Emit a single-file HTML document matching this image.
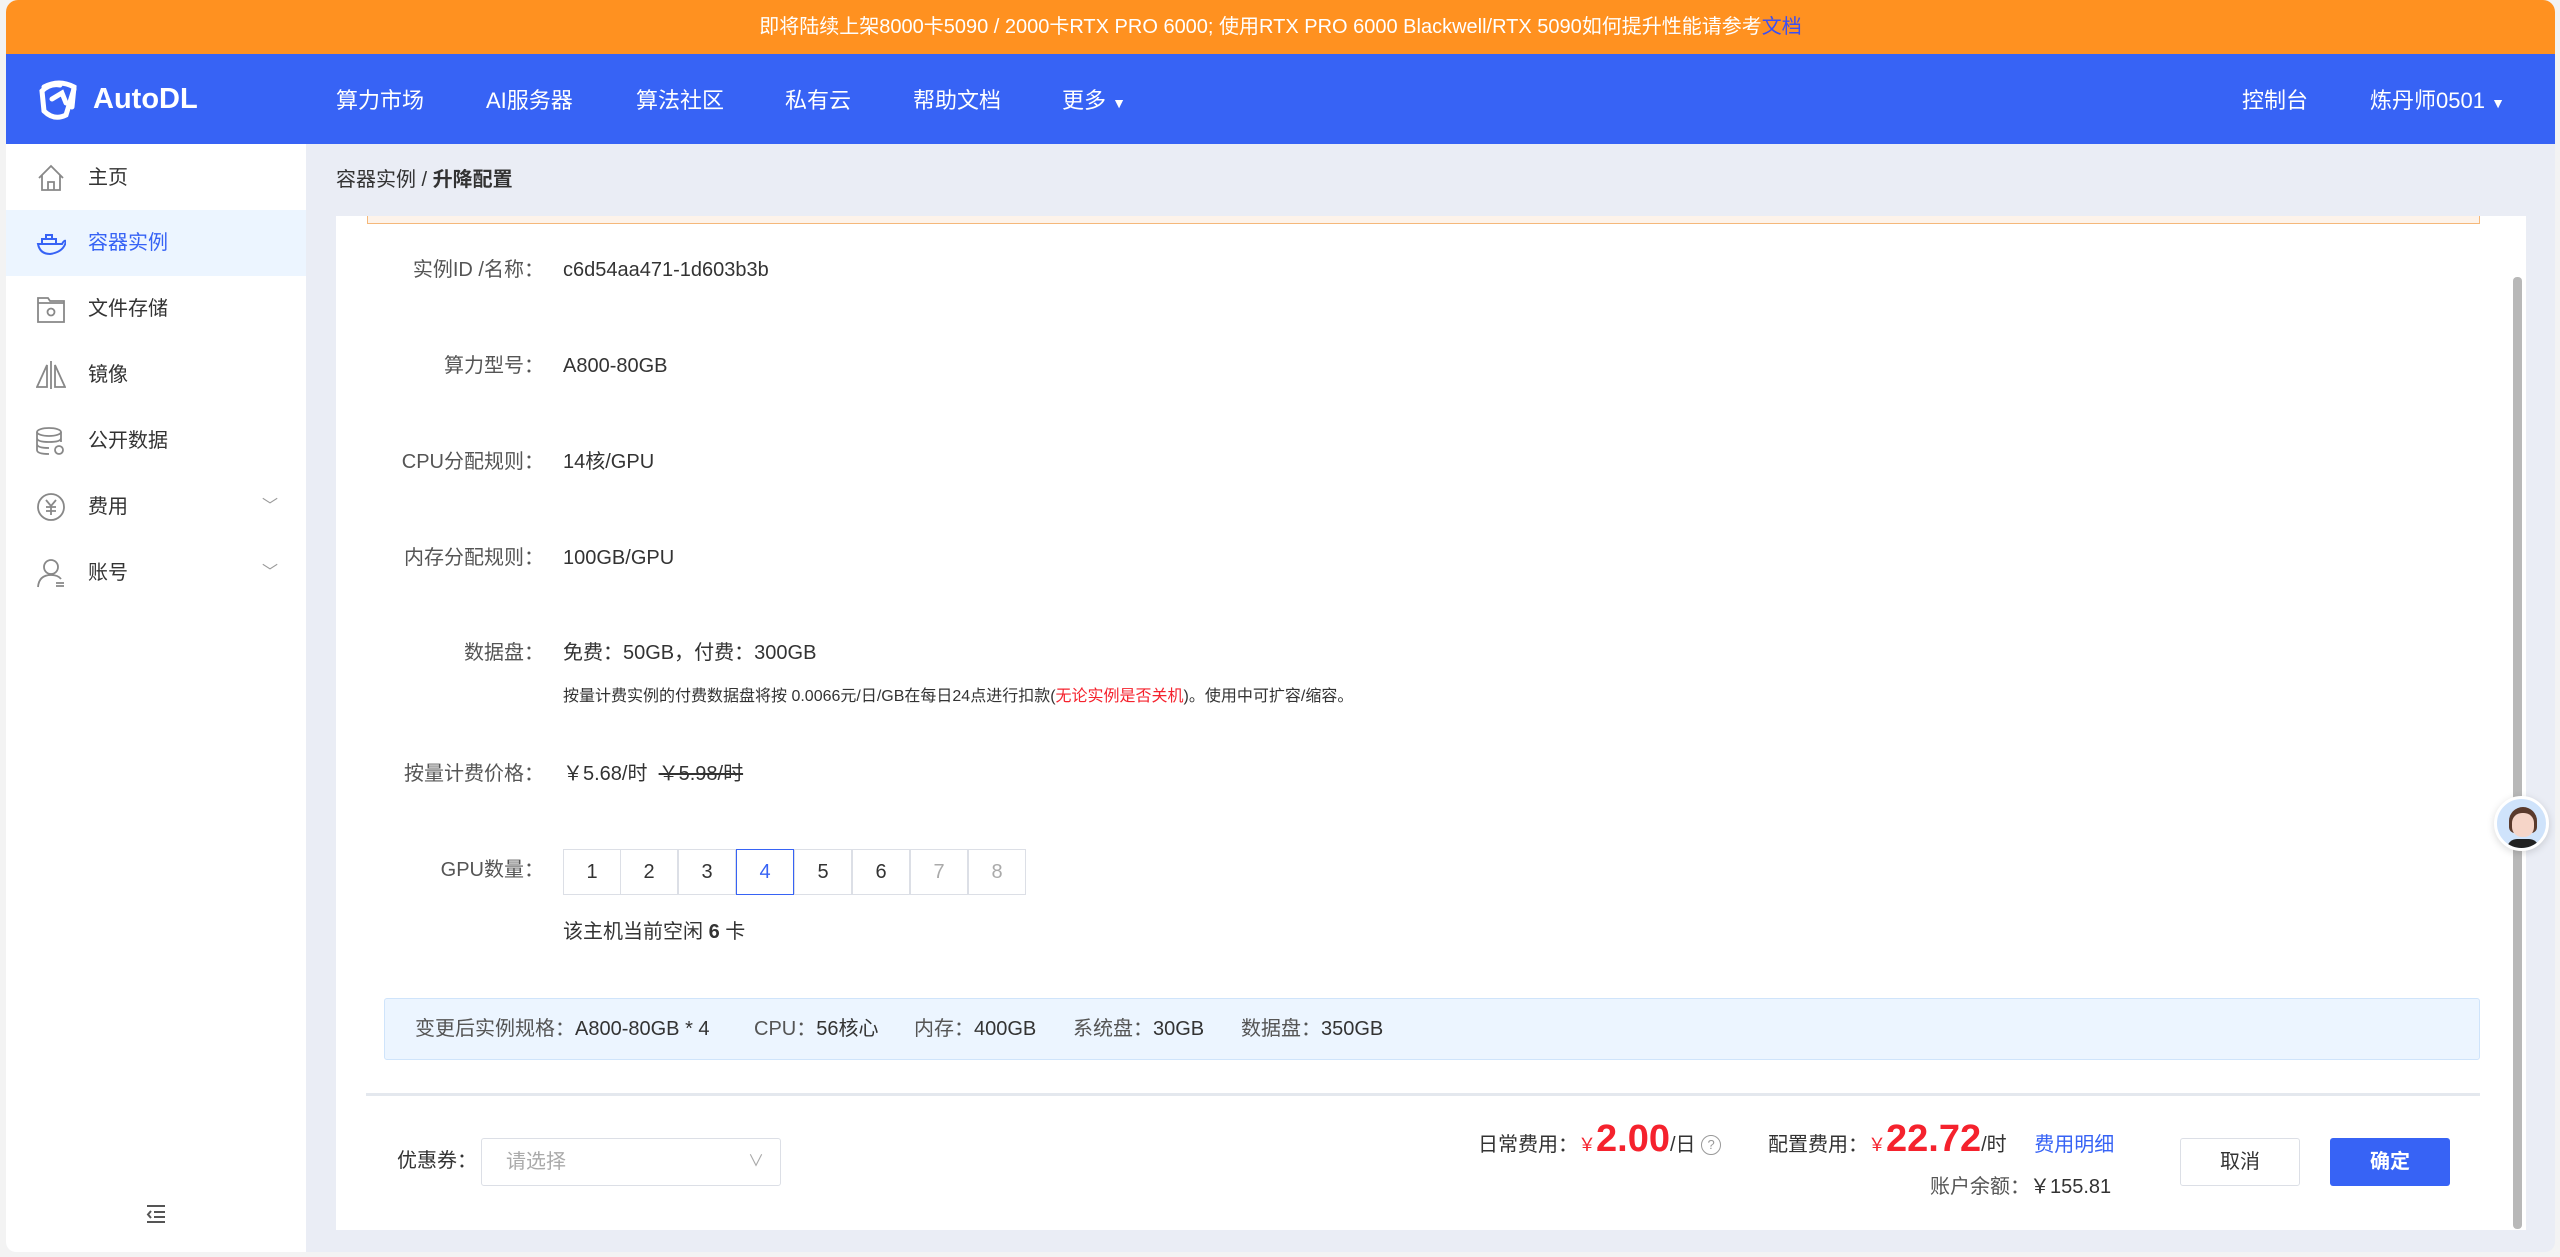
<!DOCTYPE html>
<html><head><meta charset="utf-8"><style>
*{margin:0;padding:0;box-sizing:border-box}
body{width:2560px;height:1257px;overflow:hidden;background:#f3f3f3;font-family:"Liberation Sans","Noto Sans CJK SC",sans-serif;color:#333;position:relative}
.a{position:absolute;white-space:nowrap}
#frame{position:absolute;left:6px;top:0;width:2549px;height:1252px;background:#eaedf5;border-radius:12px 12px 10px 10px;overflow:hidden}
.lbl{position:absolute;right:2011px;font-size:20px;color:#555;line-height:24px;text-align:right}
.val{position:absolute;left:557px;font-size:20px;color:#333;line-height:24px}
.side{position:absolute;left:0;width:300px;height:66px;font-size:20px;color:#333;line-height:66px;padding-left:82px}
.ic{position:absolute;left:30px;top:18px;width:30px;height:30px}
.nav{font-size:22px;color:#fff;top:86px;line-height:30px}
.gb{position:absolute;top:849px;width:58px;height:46px;border:1px solid #dcdfe6;font-size:20px;line-height:44px;text-align:center;color:#333;background:#fff}
</style></head><body>
<div id="frame">
<div class="a" style="left:0;top:0;width:2549px;height:54px;background:#ff9120"></div>
<div class="a" style="left:0;top:0;width:2549px;line-height:54px;text-align:center;font-size:20px;color:#fff">即将陆续上架8000卡5090 / 2000卡RTX PRO 6000; 使用RTX PRO 6000 Blackwell/RTX 5090如何提升性能请参考<span style="color:#3a4ff5">文档</span></div>
<div class="a" style="left:0;top:54px;width:2549px;height:90px;background:#3763f5"></div>
<svg class="a" style="left:30px;top:77px" width="46" height="46" viewBox="0 0 46 46"><g fill="none" stroke="#fff" stroke-width="5" stroke-linecap="round"><path d="M8 10 Q23 2 38 10 L36 30"/><path d="M38 12 L30 38 Q18 44 8 34"/><path d="M8 34 L6 14 Q14 6 24 8"/><path d="M16 22 L26 16 L30 26"/></g></svg>
<div class="a" style="left:87px;top:79px;font-size:29px;font-weight:bold;color:#fff;line-height:40px">AutoDL</div>
<div class="a nav" style="left:330px">算力市场</div>
<div class="a nav" style="left:480px">AI服务器</div>
<div class="a nav" style="left:630px">算法社区</div>
<div class="a nav" style="left:779px">私有云</div>
<div class="a nav" style="left:907px">帮助文档</div>
<div class="a nav" style="left:1056px">更多 <span style="font-size:14px">▼</span></div>
<div class="a nav" style="left:2236px">控制台</div>
<div class="a nav" style="left:2364px">炼丹师0501 <span style="font-size:14px">▼</span></div>
<!-- sidebar -->
<div class="a" style="left:0;top:144px;width:300px;height:1108px;background:#fff"></div>
<div class="side" style="top:145px">主页<svg class="ic" viewBox="0 0 30 30" fill="none" stroke="#888" stroke-width="1.8"><path d="M3 15 L15 3 L27 15 M6 12 V27 H24 V12 M12 27 V19 H18 V27"/></svg></div>
<div class="side" style="top:210px;background:#ecf5ff;color:#3763f5">容器实例<svg class="ic" viewBox="0 0 30 30" fill="none" stroke="#3763f5" stroke-width="2"><path d="M2 16 H26 Q28 12 30 13 Q28 24 14 26 Q4 26 2 16 Z M6 16 V11 H20 V16 M10 11 V7 H16 V11"/></svg></div>
<div class="side" style="top:276px">文件存储<svg class="ic" viewBox="0 0 30 30" fill="none" stroke="#888" stroke-width="1.8"><path d="M2 4 H12 L14 7 H28 V28 H2 Z M2 9 H28"/><circle cx="15" cy="18" r="3.5"/></svg></div>
<div class="side" style="top:342px">镜像<svg class="ic" viewBox="0 0 30 30" fill="none" stroke="#888" stroke-width="1.8"><path d="M15 1 V29 M11 5 L1 27 H11 Z M19 5 L29 27 H19 Z"/></svg></div>
<div class="side" style="top:408px">公开数据<svg class="ic" viewBox="0 0 30 30" fill="none" stroke="#888" stroke-width="1.8"><ellipse cx="13" cy="6" rx="12" ry="4"/><path d="M1 6 V24 Q1 28 13 28 M25 6 V16 M1 12 Q1 16 13 16 Q25 16 25 12 M1 18 Q1 22 13 22"/><circle cx="23" cy="24" r="4"/></svg></div>
<div class="side" style="top:474px">费用<svg class="ic" viewBox="0 0 30 30" fill="none" stroke="#888" stroke-width="1.8"><circle cx="15" cy="15" r="13"/><path d="M10 8 L15 14 L20 8 M15 14 V23 M10 15 H20 M10 19 H20"/></svg><span class="a" style="left:256px;top:0;color:#999;font-size:16px">﹀</span></div>
<div class="side" style="top:540px">账号<svg class="ic" viewBox="0 0 30 30" fill="none" stroke="#888" stroke-width="1.8"><circle cx="15" cy="9" r="7"/><path d="M2 29 Q3 17 15 17 Q22 17 25 21 M20 25 H28 M20 28 H28"/></svg><span class="a" style="left:256px;top:0;color:#999;font-size:16px">﹀</span></div>
<svg class="a" style="left:140px;top:1204px" width="20" height="20" viewBox="0 0 20 20" fill="none" stroke="#555" stroke-width="2"><path d="M1 2 H19 M8 8 H19 M8 13 H19 M1 18 H19 M5 7 L2 10.5 L5 14"/></svg>
<div class="a" style="left:330px;top:168px;font-size:20px;color:#333;line-height:24px">容器实例 / <b>升降配置</b></div>
<!-- card -->
<div class="a" style="left:330px;top:216px;width:2190px;height:1014px;background:#fff"></div>
<div class="a" style="left:361px;top:216px;width:2113px;height:8px;background:#fdf3ea;border:1px solid #f5b87a;border-top:none"></div>
<div class="a" style="left:2507px;top:277px;width:9px;height:952px;background:#b8b8b8;border-radius:4px"></div>

<div class="lbl" style="top:258px">实例ID /名称：</div><div class="val" style="top:258px">c6d54aa471-1d603b3b</div>
<div class="lbl" style="top:354px">算力型号：</div><div class="val" style="top:354px">A800-80GB</div>
<div class="lbl" style="top:450px">CPU分配规则：</div><div class="val" style="top:450px">14核/GPU</div>
<div class="lbl" style="top:546px">内存分配规则：</div><div class="val" style="top:546px">100GB/GPU</div>
<div class="lbl" style="top:641px">数据盘：</div><div class="val" style="top:641px">免费：50GB，付费：300GB</div>
<div class="val" style="top:685px;font-size:16px">按量计费实例的付费数据盘将按 0.0066元/日/GB在每日24点进行扣款(<span style="color:#f5222d">无论实例是否关机</span>)。使用中可扩容/缩容。</div>
<div class="lbl" style="top:762px">按量计费价格：</div><div class="val" style="top:762px">￥5.68/时 &nbsp;<s>￥5.98/时</s></div>
<div class="lbl" style="top:858px">GPU数量：</div>
<div class="gb" style="left:557px">1</div><div class="gb" style="left:614px">2</div><div class="gb" style="left:672px">3</div>
<div class="gb" style="left:730px;border-color:#3763f5;color:#3763f5;z-index:2">4</div>
<div class="gb" style="left:788px">5</div><div class="gb" style="left:846px">6</div>
<div class="gb" style="left:904px;color:#aaa">7</div><div class="gb" style="left:962px;color:#aaa">8</div>
<div class="val" style="top:920px">该主机当前空闲 <b>6</b> 卡</div>
<div class="a" style="left:378px;top:998px;width:2096px;height:62px;background:#ecf5ff;border:1px solid #cfe4fb;border-radius:3px"></div>
<div class="a" style="left:409px;top:1017px;font-size:20px;line-height:24px;color:#555">变更后实例规格：<span style="color:#333">A800-80GB * 4</span></div>
<div class="a" style="left:748px;top:1017px;font-size:20px;line-height:24px;color:#555">CPU：<span style="color:#333">56核心</span></div>
<div class="a" style="left:908px;top:1017px;font-size:20px;line-height:24px;color:#555">内存：<span style="color:#333">400GB</span></div>
<div class="a" style="left:1067px;top:1017px;font-size:20px;line-height:24px;color:#555">系统盘：<span style="color:#333">30GB</span></div>
<div class="a" style="left:1235px;top:1017px;font-size:20px;line-height:24px;color:#555">数据盘：<span style="color:#333">350GB</span></div>
<div class="a" style="left:360px;top:1093px;width:2114px;height:3px;background:#e4e8ee"></div>
<!-- footer -->
<div class="a" style="left:391px;top:1149px;font-size:20px;line-height:24px">优惠券：</div>
<div class="a" style="left:475px;top:1138px;width:300px;height:48px;border:1px solid #dcdfe6;border-radius:3px;font-size:20px;color:#aaa;line-height:46px;padding-left:24px">请选择<span style="position:absolute;right:16px;font-size:16px">∨</span></div>
<div class="a" style="left:1472px;top:1119px;font-size:20px;line-height:40px">日常费用：<span style="color:#f5222d;font-size:18px">￥</span><b style="color:#f5222d;font-size:38px">2.00</b>/日 <span style="display:inline-block;width:20px;height:20px;border:1.5px solid #999;border-radius:50%;font-size:13px;line-height:18px;text-align:center;color:#999;vertical-align:2px">?</span></div>
<div class="a" style="left:1762px;top:1119px;font-size:20px;line-height:40px">配置费用：<span style="color:#f5222d;font-size:18px">￥</span><b style="color:#f5222d;font-size:38px">22.72</b>/时 <span style="color:#3763f5;margin-left:22px">费用明细</span></div>
<div class="a" style="left:1924px;top:1175px;font-size:20px;line-height:24px;color:#555">账户余额：<span style="color:#333">￥155.81</span></div>
<div class="a" style="left:2174px;top:1138px;width:120px;height:48px;border:1px solid #dcdfe6;border-radius:3px;font-size:20px;line-height:46px;text-align:center">取消</div>
<div class="a" style="left:2324px;top:1138px;width:120px;height:48px;background:#3763f5;border-radius:3px;font-size:20px;line-height:48px;text-align:center;color:#fff;font-weight:bold">确定</div>
</div>
<div class="a" style="left:2494px;top:796px;width:55px;height:55px;border-radius:50%;background:#cfe3fb;border:3px solid #fff;box-shadow:0 2px 8px rgba(0,0,0,.15);overflow:hidden">
<div class="a" style="left:12px;top:8px;width:28px;height:26px;background:#5a3a2c;border-radius:14px 14px 6px 6px"></div>
<div class="a" style="left:15px;top:14px;width:22px;height:24px;background:#f6d5c8;border-radius:10px"></div>
<div class="a" style="left:10px;top:40px;width:32px;height:14px;background:#222;border-radius:10px 10px 0 0"></div>
</div>
</body></html>
